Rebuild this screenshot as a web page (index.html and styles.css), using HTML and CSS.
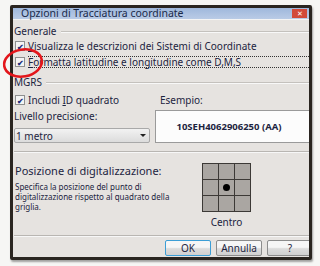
FILE: index.html
```html
<!DOCTYPE html>
<html>
<head>
<meta charset="utf-8">
<link rel="stylesheet" href="styles.css">
</head>
<body>
<div class="page">
  <div class="dialog">
    <div class="titlebar">
      <span class="title">Opzioni di Tracciatura coordinate</span>
      <span class="close">✕</span>
    </div>
    <div class="body">
      <div class="group-head"><span>Generale</span><i class="rule"></i></div>
      <div class="check"><span class="box">✔</span><span><u>V</u>isualizza le descrizioni dei Sistemi di Coordinate</span></div>
      <div class="check focus"><span class="box">✔</span><span><u>F</u>ormatta latitudine e longitudine come D,M,S</span></div>
      <div class="group-head mgrs"><span>MGRS</span><i class="rule"></i></div>
      <div class="mgrs-row">
        <div class="col-left">
          <div class="check"><span class="box">✔</span><span>Includi <u>I</u>D quadrato</span></div>
          <div class="label">Livello precisione:</div>
          <div class="select"><span>1 metro</span><span class="arrow"></span></div>
        </div>
        <div class="col-right">
          <div class="label">Esempio:</div>
          <div class="example">10SEH4062906250 (AA)</div>
        </div>
      </div>
      <div class="sep"></div>
      <div class="digit-row">
        <div class="digit-text">
          <div class="heading">Posizione di digitalizzazione:</div>
          <div class="desc">Specifica la posizione del punto di digitalizzazione rispetto al quadrato della griglia.</div>
        </div>
        <div class="grid-col">
          <div class="grid">
            <i></i><i></i><i></i><i></i><i class="dot"></i><i></i><i></i><i></i><i></i>
          </div>
          <div class="centro">Centro</div>
        </div>
      </div>
      <div class="sep bottom"></div>
      <div class="buttons">
        <span class="btn ok">OK</span>
        <span class="btn">Annulla</span>
        <span class="btn">?</span>
      </div>
    </div>
  </div>
  <svg class="circle" width="50" height="36" viewBox="0 0 50 36"><ellipse cx="22" cy="17" rx="19" ry="13.5" fill="none" stroke="#e3161b" stroke-width="2.6" transform="rotate(-10 22 17)"/></svg>
</div>
</body>
</html>
```
FILE: styles.css
```css
* { box-sizing: border-box; }
html, body { margin: 0; padding: 0; }
body {
  width: 320px; height: 266px; overflow: hidden;
  background: #f6f6f4;
  font-family: "Noto Sans", "Open Sans", sans-serif;
  color: #1c2440;
}
u { text-decoration-thickness: 1px; text-underline-offset: 1px; }
.page { position: relative; width: 320px; height: 266px; padding: 5px 0 0 10px; }
.dialog {
  width: 302px; height: 255px;
  border: 3px solid #2a2520;
  border-radius: 2px;
  background: #e6e3e0;
  overflow: hidden;
  box-shadow: 1px 2px 2px rgba(0,0,0,0.35);
}
.titlebar {
  height: 12px;
  background: linear-gradient(#9fb8dc, #b9cbe6);
  display: flex; align-items: flex-start; justify-content: space-between;
  border-bottom: 1px solid #f4f4f4;
}
.title { font-size: 10.5px; line-height: 11px; color: #1a2a4a; padding-left: 8px; white-space: nowrap; }
.close {
  width: 15px; height: 9px; background: #d24a3a; color: #fff;
  font-size: 7px; line-height: 9px; text-align: center; margin-right: 2px; margin-top: 1px;
}
.body { padding: 0 0 0 1px; }
.group-head { display: flex; align-items: center; height: 14px; margin-top: 4px; font-size: 10px; }
.group-head .rule { flex: 1; height: 2px; border-top: 1px solid #c4c1bd; border-bottom: 1px solid #f8f8f8; margin-left: 4px; margin-top: 1px; }
.group-head.mgrs { margin-top: 7px; }
.check { display: flex; align-items: center; height: 16px; font-size: 10px; white-space: nowrap; }
.box {
  width: 10px; height: 10px; border: 1px solid #8e8f8f; background: #f4f4f4;
  margin: 0 3px 0 1px; flex: none;
  font-size: 8px; line-height: 9px; text-align: center; color: #1d2e7a; font-weight: bold;
}
.check.focus { height: 12px; margin-top: 2px; }
.check.focus > span:last-child { border-top: 1px dotted #333; border-bottom: 1px dotted #333; flex: 1; line-height: 10px; }
.mgrs-row { display: flex; margin-top: 3px; }
.col-left { width: 138px; }
.col-right { flex: 1; margin-left: 5px; }
.label { font-size: 10px; height: 16px; line-height: 16px; }
.col-right .label { margin-left: 5px; }
.select {
  margin-top: 4px; height: 15px; width: 136px;
  display: flex; align-items: center; justify-content: space-between;
  background: linear-gradient(#f2f2f2, #dcdcdc);
  border: 1px solid #a9a9a9; border-radius: 2px;
  font-size: 10px; padding-left: 1px;
}
.arrow { width: 0; height: 0; border-left: 3px solid transparent; border-right: 3px solid transparent; border-top: 3px solid #222; margin-right: 3px; }
.example {
  margin-top: 2px; height: 33px; width: 160px;
  background: #fcfcfc; border: 1px solid #9a9a9a;
  display: flex; align-items: center; justify-content: center;
  font-weight: bold; font-size: 9.5px; color: #1c2440; padding-right: 12px;
}
.sep { height: 2px; border-top: 1px solid #b9b6b2; border-bottom: 1px solid #f7f7f7; margin-top: 8px; }
.digit-row { display: flex; }
.digit-text { width: 188px; padding-left: 1px; }
.heading { font-size: 11px; margin-top: 10px; height: 16px; line-height: 16px; }
.desc { font-size: 8px; line-height: 10px; margin-top: 3px; width: 165px; }
.grid-col { display: flex; flex-direction: column; align-items: center; width: 49px; margin-top: 10px; }
.grid {
  display: grid; grid-template-columns: repeat(3, 15px); grid-template-rows: repeat(3, 15px);
  gap: 1px; background: #3c3936; border: 1px solid #3c3936;
}
.grid i { background: #aaa6a2; display: block; position: relative; }
.grid i.dot::after { content: ""; position: absolute; left: 4px; top: 4px; width: 7px; height: 7px; border-radius: 50%; background: #000; }
.centro { font-size: 10px; margin-top: 3px; line-height: 14px; }
.sep.bottom { margin-top: 6px; }
.buttons { display: flex; gap: 5px; margin-top: 3px; padding-left: 151px; }
.btn {
  width: 46px; height: 16px; flex: none;
  border: 1px solid #8c8c8c; border-radius: 2px;
  background: linear-gradient(#f6f6f6 45%, #dcdcdc 55%, #d0d0d0);
  font-size: 10px; text-align: center; line-height: 14px;
}
.btn.ok { border-color: #3c9ed6; }
.circle { position: absolute; left: 1px; top: 46px; }
```
